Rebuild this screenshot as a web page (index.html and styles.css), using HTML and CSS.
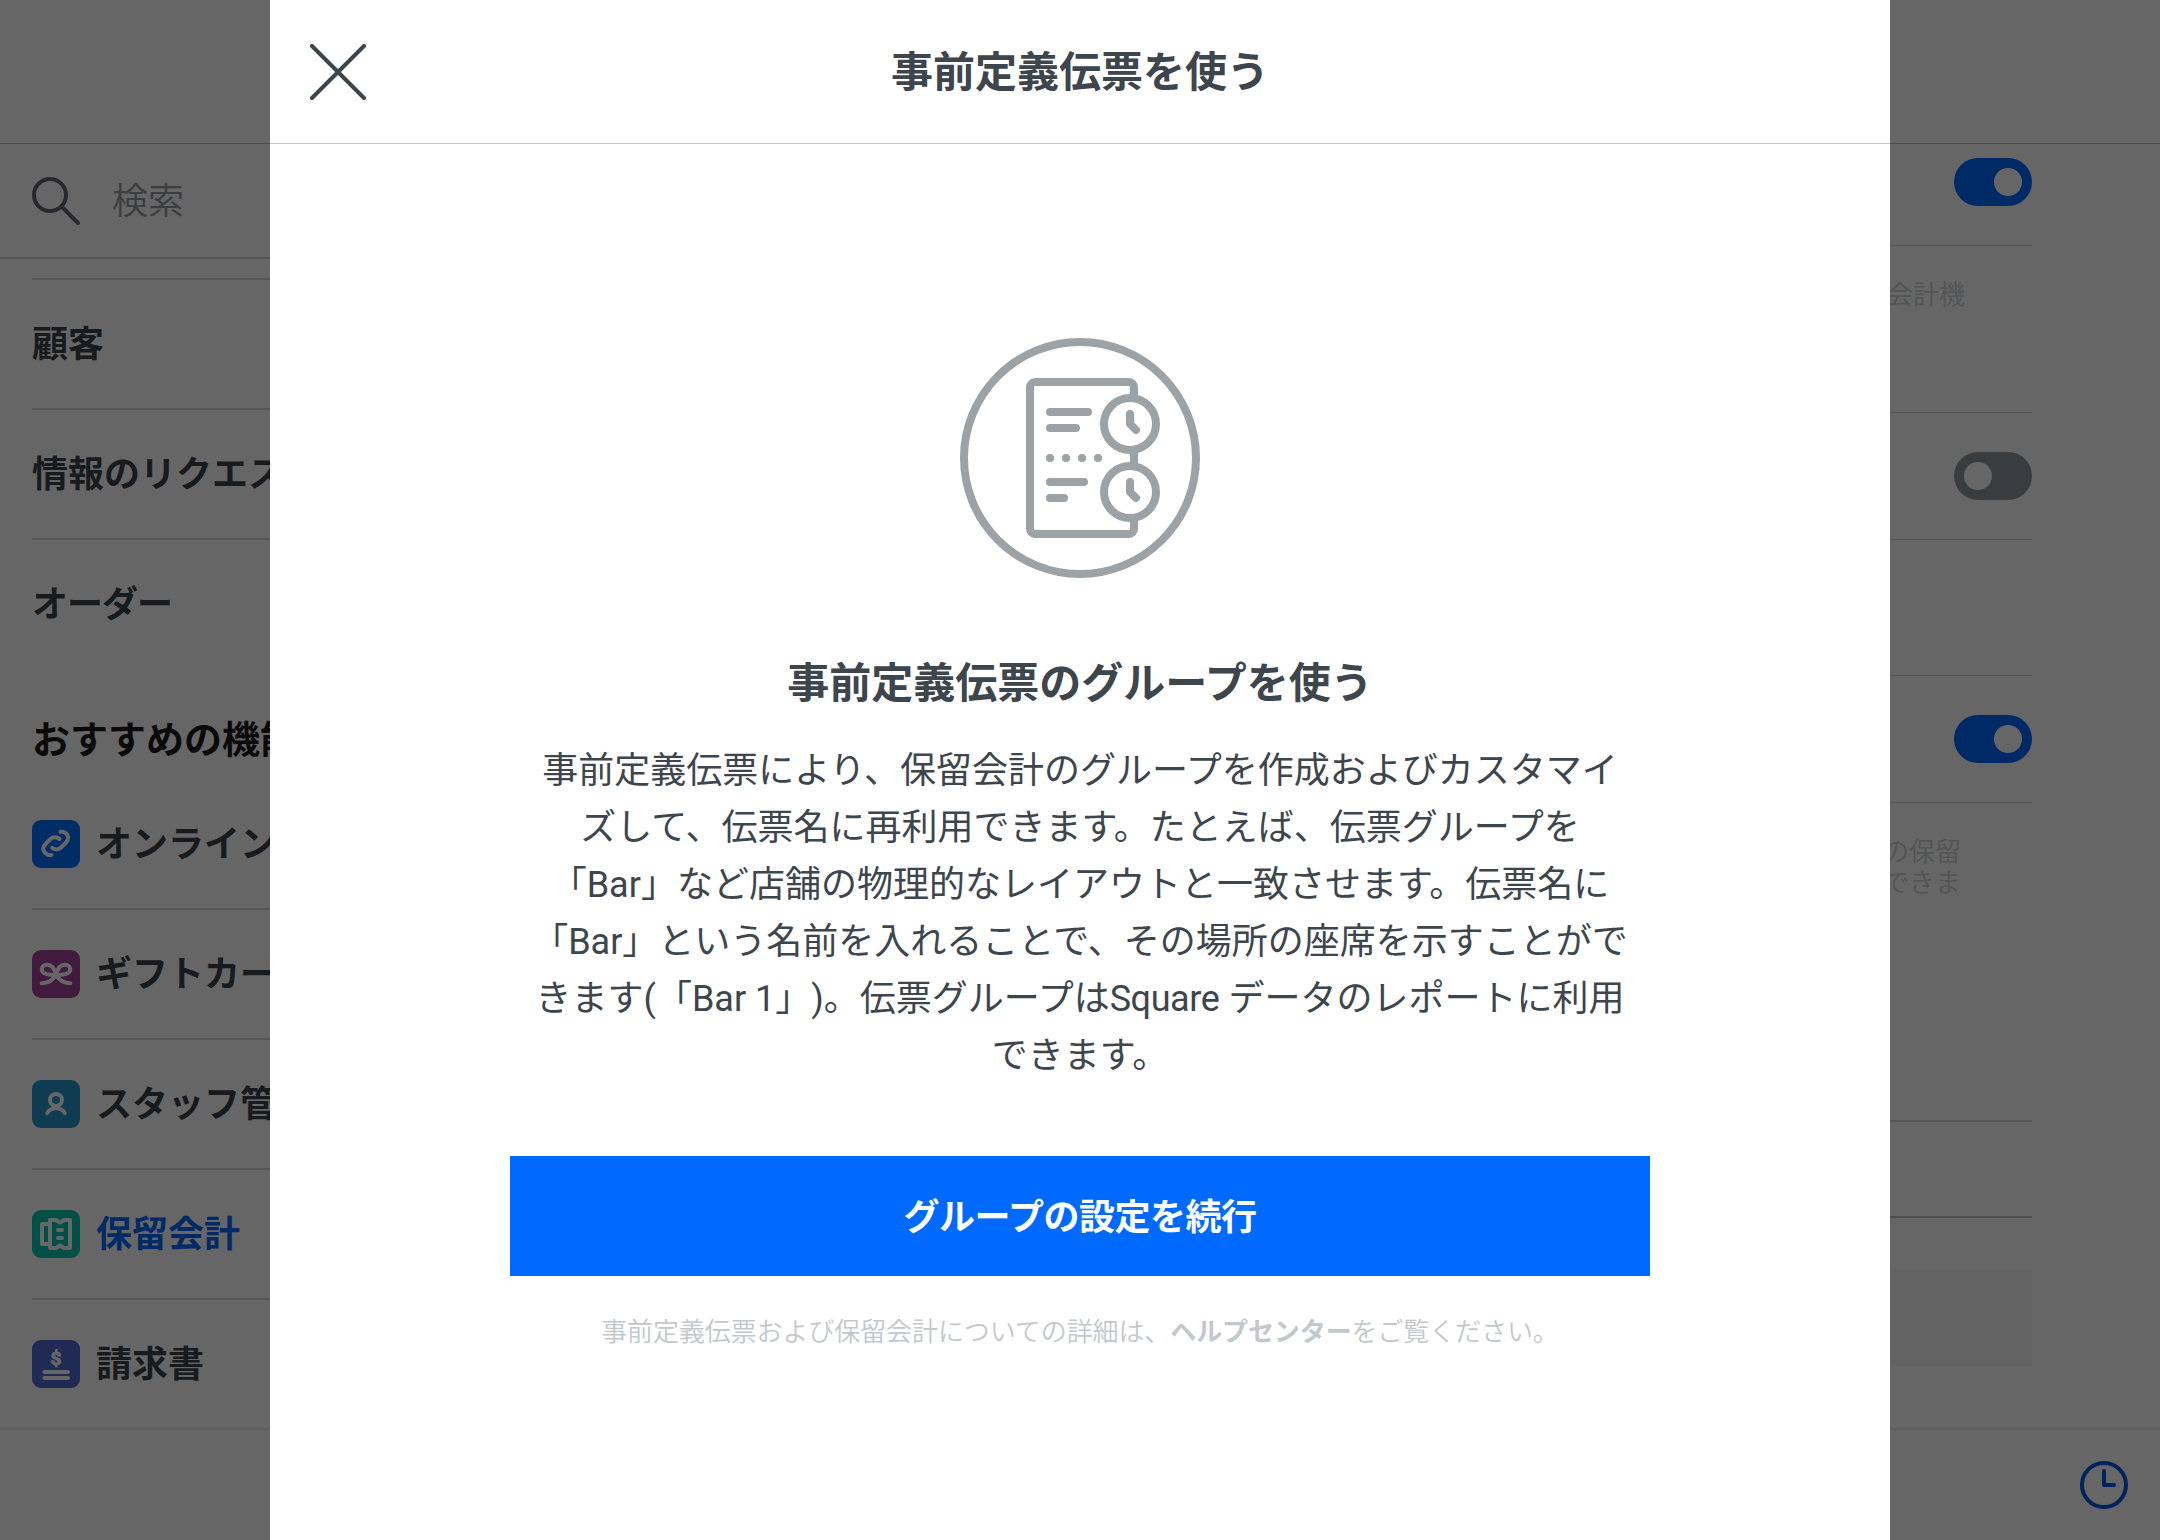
FILE: index.html
```html
<!DOCTYPE html>
<html lang="ja">
<head>
    <meta charset="UTF-8">
    <meta name="viewport" content="width=device-width, initial-scale=1.0">
    <title>保留会計</title>

    <link rel="stylesheet" href="styles.css">
</head>
<body>
    <div class="page">
        <header class="topbar"></header>
        <div class="columns">
            <nav class="sidebar">
                <div class="search">
                    <svg class="icon48" viewBox="0 0 48 48" fill="none" stroke="#5f6973" stroke-width="4" stroke-linecap="round">
                        <circle cx="18" cy="18" r="16"/>
                        <path d="M30 30L46 46"/>
                    </svg>
                    <span>検索</span>
                </div>
                <ul class="menu menu-first">
                    <li><span>顧客</span></li>
                    <li><span>情報のリクエス</span></li>
                    <li class="tight"><span>オーダー</span></li>
                </ul>
                <h2 class="menu-title">おすすめの機能</h2>
                <ul class="menu">
                    <li>
                        <svg class="icon48 link" viewBox="0 0 48 48">
                            <path d="M28.5 11.8C32 11 36.6 14 36 18.5C35.8 20.5 35 21.5 33.5 23L29 27.5C26.5 30 22.5 30 20 27.8"/>
                            <path d="M19.5 35C16 35.8 10.8 33 11.2 28.2C11.4 26.2 12.5 25 14 23.5L18.5 19C21 16.6 25 16.6 27.5 19"/>
                        </svg>
                        <span>オンライン</span>
                    </li>
                    <li>
                        <svg class="icon48 gift" viewBox="0 0 48 48">
                            <path d="M24 25C22.5 18 19 14.8 15 14.8C11.5 14.8 9.8 17 9.8 19.5C9.8 23.5 15 25 24 25C27 30 31 33.2 38.3 33.2"/>
                            <path d="M24 25C25.5 18 29 14.8 33 14.8C36.5 14.8 38.2 17 38.2 19.5C38.2 23.5 33 25 24 25C21 30 17 33.2 9.7 33.2"/>
                        </svg>
                        <span>ギフトカー</span>
                    </li>
                    <li>
                        <svg class="icon48 staff" viewBox="0 0 48 48">
                            <circle cx="24" cy="20" r="6"/>
                            <path d="M15.2 33C19 26.8 29 26.8 32.8 33"/>
                        </svg>
                        <span>スタッフ管</span>
                    </li>
                    <li class="selected">
                        <svg class="icon48 ticket" viewBox="0 0 48 48">
                            <path d="M18 10H24L28 12.5L32 10H38V38H32L28 35.5L24 38H18Z"/>
                            <path d="M18 14H10V34H18M26 20H30M26 28H30"/>
                        </svg>
                        <span>保留会計</span>
                    </li>
                    <li>
                        <svg class="icon48 invoice" viewBox="0 0 48 48">
                            <text x="24" y="24.5" text-anchor="middle">$</text>
                            <path d="M12.5 32H36M12.5 38H36"/>
                        </svg>
                        <span>請求書</span>
                    </li>
                </ul>
            </nav>
            <main class="settings">
                <div class="setting setting-top"><span class="toggle on"></span></div>
                <p class="note note-terminal">会計機</p>
                <div class="setting setting-line"><span class="toggle"></span></div>
                <div class="spacer"></div>
                <div class="setting setting-line"><span class="toggle on"></span></div>
                <p class="note note-reuse">の保留<br>できま</p>
                <div class="field"></div>
                <div class="box"></div>
            </main>
        </div>
        <footer class="bottombar">
            <svg class="icon48" viewBox="0 0 48 48" fill="none" stroke="#0055e0" stroke-width="4" stroke-linecap="round" stroke-linejoin="round">
                <circle cx="24" cy="24" r="22"/>
                <path d="M24 10V24H34"/>
            </svg>
        </footer>
    </div>

    <div class="overlay">
        <section class="modal">
            <header class="modal-header">
                <svg class="close" viewBox="0 0 56 56" fill="none" stroke="#3d454d" stroke-width="4" stroke-linecap="round">
                    <path d="M2 2L54 54M54 2L2 54"/>
                </svg>
                <h1>事前定義伝票を使う</h1>
            </header>
            <div class="modal-body">
                <svg class="hero" viewBox="0 0 240 240" fill="none" stroke="#9da2a6" stroke-width="8" stroke-linecap="round" stroke-linejoin="round">
                    <circle cx="120" cy="120" r="116"/>
                    <rect x="70" y="44" width="104" height="152" rx="5"/>
                    <path d="M90 74H128M90 90H116M90 144H124M90 160H104"/>
                    <path d="M90 120h.01M106 120h.01M122 120h.01M138 120h.01"/>
                    <circle cx="170" cy="86" r="26" fill="#fff"/>
                    <circle cx="170" cy="154" r="26" fill="#fff"/>
                    <path d="M170 76V86L176 92M170 144V154L176 160"/>
                </svg>
                <h2>事前定義伝票のグループを使う</h2>
                <p class="description">事前定義伝票により、保留会計のグループを作成およびカスタマイ<br>ズして、伝票名に再利用できます。たとえば、伝票グループを<br>「Bar」など店舗の物理的なレイアウトと一致させます。伝票名に<br>「Bar」という名前を入れることで、その場所の座席を示すことがで<br>きます(「Bar 1」)。伝票グループは<span class="latin">Square</span> データのレポートに利用<br>できます。</p>
                <button type="button" class="continue">グループの設定を続行</button>
                <p class="help">事前定義伝票および保留会計についての詳細は、<b>ヘルプセンター</b>をご覧ください。</p>
            </div>
        </section>
    </div>
</body>
</html>
```
FILE: styles.css
```css
*{
    margin: 0;
    padding: 0;
    box-sizing: border-box;
}
body{
    width: 2160px;
    height: 1540px;
    overflow: hidden;
    background-color: #fff;
    color: #3d454d;
    font-family: Roboto, "Noto Sans CJK JP", sans-serif;
    font-size: 36px;
    line-height: 1.4;
    text-spacing-trim: space-all;
}
ul{
    list-style: none;
}
svg{
    display: block;
    flex: none;
}
.icon48{
    width: 48px;
    height: 48px;
}

/* page behind the dialog */
.page{
    display: flex;
    flex-direction: column;
    height: 1540px;
}
.topbar{
    height: 144px;
    border-bottom: 1px solid #c3c3c3;
}
.columns{
    display: flex;
    height: 1284px;
}
.sidebar{
    width: 720px;
}
.search{
    display: flex;
    align-items: center;
    gap: 32px;
    height: 115px;
    padding-left: 32px;
    border-bottom: 2px solid #d6d6d6;
    color: #949a9f;
    font-weight: 350;
}
.search span{
    padding-top: 4px;
}
.menu{
    padding-left: 32px;
    font-weight: 700;
}
.menu-first{
    margin-top: 19px;
}
.menu-first li:first-child{
    height: 132px;
    border-top: 2px solid #d6d6d6;
}
.menu li{
    display: flex;
    align-items: center;
    gap: 16px;
    height: 130px;
    border-bottom: 2px solid #d6d6d6;
    white-space: nowrap;
}
.menu li:last-child{
    border-bottom: 0;
    padding-bottom: 2px;
}
.menu span{
    padding-top: 3px;
}
.menu .tight{
    letter-spacing: -1px;
}
.menu .selected{
    color: #006aff;
}
.menu-title{
    height: 110px;
    padding: 42px 0 0 32px;
    line-height: 56px;
    font-size: 38px;
    font-weight: 700;
    color: #1a1a1a;
}
.menu svg{
    border-radius: 9px;
    fill: none;
    stroke: #fff;
    stroke-width: 4;
    stroke-linecap: round;
    stroke-linejoin: round;
}
.menu .link{
    background-color: #0070ff;
}
.menu .gift{
    background-color: #a5439b;
}
.menu .staff{
    background-color: #2896cb;
}
.menu .ticket{
    background-color: #00c8ae;
}
.menu .invoice{
    background-color: #4e6cd4;
}
.invoice text{
    fill: #fff;
    stroke: #fff;
    stroke-width: 1;
    font-size: 19px;
    font-weight: 700;
}

.settings{
    flex: 1;
    padding-right: 128px;
}
.setting{
    display: flex;
    align-items: center;
    justify-content: flex-end;
    height: 128px;
    border-bottom: 1px solid #c8cbcd;
}
.setting-top{
    height: 102px;
    padding-bottom: 25px;
}
.setting-line{
    border-top: 1px solid #c8cbcd;
}
.toggle{
    display: flex;
    width: 78px;
    height: 48px;
    padding: 10px;
    border-radius: 24px;
    background-color: #91999e;
}
.toggle::before{
    content: "";
    width: 28px;
    height: 28px;
    border-radius: 50%;
    background-color: #fff;
}
.toggle.on{
    justify-content: flex-end;
    background-color: #006aff;
}
.note{
    text-align: right;
    font-size: 26px;
    font-weight: 350;
    line-height: 31px;
    color: #ced2d5;
}
.note-terminal{
    height: 166px;
    padding: 34px 67px 0 0;
}
.spacer{
    height: 135px;
}
.note-reuse{
    height: 317px;
    padding: 34px 71px 0 0;
}
.field{
    height: 98px;
    border-top: 2px solid #d6d6d6;
    border-bottom: 2px solid #c3c3c3;
}
.box{
    height: 96px;
    margin-top: 52px;
    background-color: #f8f8f8;
}
.bottombar{
    display: flex;
    justify-content: flex-end;
    height: 112px;
    padding: 31px 32px 0 0;
    border-top: 2px solid #f0f0f0;
}

/* dialog */
.overlay{
    position: absolute;
    top: 0;
    left: 0;
    display: flex;
    justify-content: center;
    width: 2160px;
    height: 1540px;
    background-color: rgba(0, 0, 0, .6);
}
.modal{
    width: 1620px;
    background-color: #fff;
}
.modal-header{
    display: grid;
    grid-template-columns: 56px 1fr 56px;
    align-items: center;
    height: 144px;
    padding: 0 40px;
    border-bottom: 1px solid #c3c3c3;
}
.close{
    width: 56px;
    height: 56px;
}
.modal-header h1{
    padding-top: 3px;
    text-align: center;
    font-size: 42px;
    font-weight: 700;
}
.modal-body{
    display: flex;
    flex-direction: column;
    align-items: center;
    padding-top: 194px;
}
.hero{
    width: 240px;
    height: 240px;
}
.modal-body h2{
    margin-top: 76px;
    line-height: 60px;
    font-size: 42px;
    font-weight: 700;
}
.description{
    margin-top: 29px;
    line-height: 57px;
    text-align: center;
    white-space: nowrap;
    font-weight: 400;
}
.latin{
    letter-spacing: -.4px;
}
.continue{
    width: 1140px;
    height: 120px;
    margin-top: 71px;
    padding-top: 3px;
    border: 0;
    background-color: #006aff;
    color: #fff;
    font-family: inherit;
    font-size: 36px;
    font-weight: 700;
    line-height: 50px;
    letter-spacing: -.5px;
}
.help{
    margin-top: 36px;
    line-height: 40px;
    font-size: 26px;
    font-weight: 350;
    letter-spacing: -.1px;
    color: #c3c8cc;
}
.help b{
    font-weight: 700;
}
```
